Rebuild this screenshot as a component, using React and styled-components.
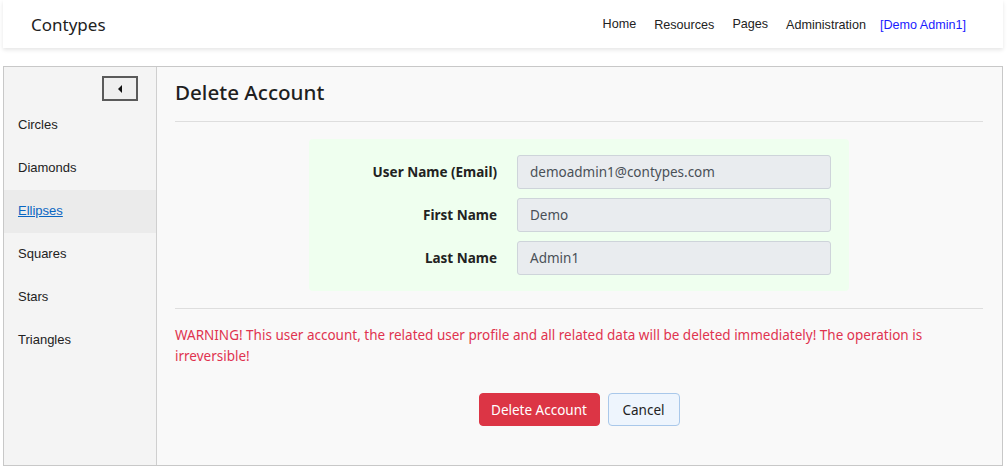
import styled, { createGlobalStyle } from "styled-components"

const GlobalStyle = createGlobalStyle`
  html, body {
    margin: 0;
    padding: 0;
    background: #fff;
  }
  body {
    font-family: "Noto Sans", "Open Sans", sans-serif;
    color: #212529;
  }
  * {
    box-sizing: border-box;
  }
`

const Page = styled.div`
  width: 1007px;
  height: 472px;
  padding: 0 4px 6px 3px;
  display: flex;
  flex-direction: column;
`

const Header = styled.header`
  height: 48px;
  flex: 0 0 48px;
  display: flex;
  align-items: center;
  justify-content: space-between;
  padding: 2px 37px 0 28px;
  background: #fff;
  box-shadow: 0 2px 4px rgba(0, 0, 0, 0.1);
  margin-bottom: 18px;
`

const Brand = styled.div`
  font-size: 17px;
  color: #222;
  padding-bottom: 1px;
`

const Nav = styled.nav`
  display: flex;
  align-items: center;
  gap: 18px;
  font-family: "Liberation Sans", Arial, sans-serif;
  font-size: 12.6px;
  color: #222;
`

const NavLink = styled.span`
  color: ${({ user }) => (user ? "#1a1aff" : "#222")};
  margin-left: ${({ user }) => (user ? "-4px" : "0")};
  position: relative;
  top: ${({ raised }) => (raised ? "-1px" : "0")};
`

const Panel = styled.div`
  flex: 1;
  display: flex;
  border: 1px solid #c8c8c8;
`

const Sidebar = styled.aside`
  width: 153px;
  flex: 0 0 153px;
  background: #f4f4f4;
  border-right: 1px solid #cfcfcf;
  display: flex;
  flex-direction: column;
  padding-top: 9px;
`

const ToggleRow = styled.div`
  display: flex;
  justify-content: flex-end;
  padding-right: 18px;
  margin-bottom: 3px;
`

const ToggleButton = styled.button`
  width: 36px;
  height: 25px;
  border: 2px solid #5a5a5a;
  background: #efefef;
  padding: 0;
  display: flex;
  align-items: center;
  justify-content: center;
`

const SideItem = styled.div`
  height: 43px;
  display: flex;
  align-items: center;
  padding: 0 0 2px 14px;
  font-family: "Liberation Sans", Arial, sans-serif;
  font-size: 13px;
  color: ${({ active }) => (active ? "#0a66c2" : "#222")};
  text-decoration: ${({ active }) => (active ? "underline" : "none")};
  background: ${({ active }) => (active ? "#ebebeb" : "transparent")};
`

const Content = styled.main`
  flex: 1;
  background: #f9f9f9;
  padding: 9px 19px 0 18px;
`

const Title = styled.h2`
  margin: 0;
  font-size: 20.6px;
  font-weight: 500;
  line-height: 32px;
  color: #1f1f1f;
`

const Rule = styled.hr`
  margin: ${({ top }) => top}px 0 0 0;
  border: none;
  border-top: 1px solid #dedede;
`

const FormBox = styled.div`
  width: 540px;
  margin: 17px auto 17px;
  background: #efffef;
  border-radius: 4px;
  padding: 16px 18px 16px 0;
  display: grid;
  grid-template-columns: 188px 1fr;
  column-gap: 20px;
  row-gap: 9px;
  align-items: center;
`

const Label = styled.label`
  text-align: right;
  font-weight: 700;
  font-size: 13.5px;
  color: #222;
`

const Field = styled.div`
  height: 34px;
  border: 1px solid #ced4da;
  border-radius: 3px;
  background: #e9ecef;
  display: flex;
  align-items: center;
  padding: 0 12px;
  font-size: 13.5px;
  color: #495057;
`

const Warning = styled.p`
  margin: 16px 0 0 0;
  font-size: 13.5px;
  line-height: 21px;
  color: #e0334f;
`

const Actions = styled.div`
  display: flex;
  justify-content: center;
  gap: 8px;
  margin-top: 26px;
`

const Button = styled.button`
  height: 33px;
  padding: 0 11px;
  border-radius: 4px;
  font-family: "Noto Sans", "Open Sans", sans-serif;
  font-size: 13.5px;
  border: 1px solid ${({ danger }) => (danger ? "#dc3545" : "#a9c8ea")};
  background: ${({ danger }) => (danger ? "#dc3545" : "#eef5fd")};
  color: ${({ danger }) => (danger ? "#fff" : "#222")};
  width: ${({ w }) => w}px;
`

const sideItems = ["Circles", "Diamonds", "Ellipses", "Squares", "Stars", "Triangles"]

const fields = [
  ["User Name (Email)", "demoadmin1@contypes.com"],
  ["First Name", "Demo"],
  ["Last Name", "Admin1"],
]

export default function App() {
  return (
    <Page>
      <GlobalStyle />
      <Header>
        <Brand>Contypes</Brand>
        <Nav>
          <NavLink raised>Home</NavLink>
          <NavLink>Resources</NavLink>
          <NavLink raised>Pages</NavLink>
          <NavLink>Administration</NavLink>
          <NavLink user>[Demo Admin1]</NavLink>
        </Nav>
      </Header>
      <Panel>
        <Sidebar>
          <ToggleRow>
            <ToggleButton aria-label='collapse'>
              <svg width='6' height='8' viewBox='0 0 6 8'>
                <path d='M5 0 L1 4 L5 8 Z' fill='#111' />
              </svg>
            </ToggleButton>
          </ToggleRow>
          {sideItems.map((item) => (
            <SideItem key={item} active={item === "Ellipses"}>
              {item}
            </SideItem>
          ))}
        </Sidebar>
        <Content>
          <Title>Delete Account</Title>
          <Rule top={13} />
          <FormBox>
            {fields.map(([label, value]) => (
              <>
                <Label key={label + "l"}>{label}</Label>
                <Field key={label + "v"}>{value}</Field>
              </>
            ))}
          </FormBox>
          <Rule top={0} />
          <Warning>
            WARNING! This user account, the related user profile and all related data will be deleted immediately! The operation is irreversible!
          </Warning>
          <Actions>
            <Button danger w={121}>Delete Account</Button>
            <Button w={72}>Cancel</Button>
          </Actions>
        </Content>
      </Panel>
    </Page>
  )
}
